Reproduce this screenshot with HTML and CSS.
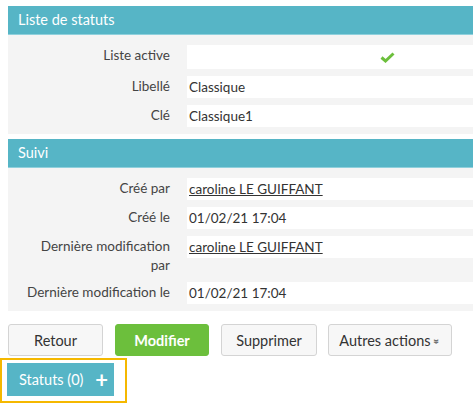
FILE: index.html
```html
<!DOCTYPE html>
<html lang="fr">
<head>
    <meta charset="UTF-8">
    <title>Liste de statuts</title>
    <link rel="stylesheet" href="styles.css">
</head>
<body>
    <div class="page">
        <div class="panel">
            <div class="panel-title">Liste de statuts</div>
            <div class="panel-body">
                <div class="row">
                    <div class="label">Liste active</div>
                    <div class="value value-check">
                        <svg width="15" height="11" viewBox="0 0 15 11"><path d="M1.5 5.5 L5.5 9 L13.5 1.5" fill="none" stroke="#6cbf3c" stroke-width="3"/></svg>
                    </div>
                </div>
                <div class="row">
                    <div class="label">Libellé</div>
                    <div class="value">Classique</div>
                </div>
                <div class="row">
                    <div class="label">Clé</div>
                    <div class="value">Classique1</div>
                </div>
            </div>
        </div>

        <div class="panel">
            <div class="panel-title">Suivi</div>
            <div class="panel-body">
                <div class="row">
                    <div class="label">Créé par</div>
                    <div class="value"><a href="#">caroline LE GUIFFANT</a></div>
                </div>
                <div class="row">
                    <div class="label">Créé le</div>
                    <div class="value">01/02/21 17:04</div>
                </div>
                <div class="row">
                    <div class="label">Dernière modification par</div>
                    <div class="value"><a href="#">caroline LE GUIFFANT</a></div>
                </div>
                <div class="row">
                    <div class="label">Dernière modification le</div>
                    <div class="value">01/02/21 17:04</div>
                </div>
            </div>
        </div>

        <div class="actions">
            <button class="btn btn-back">Retour</button>
            <button class="btn btn-edit">Modifier</button>
            <button class="btn btn-delete">Supprimer</button>
            <button class="btn btn-more">Autres actions <span class="chevron">&#x00BB;</span></button>
        </div>

        <div class="highlight">
            <button class="btn-status">Statuts (0) <span class="plus">+</span></button>
        </div>
    </div>
</body>
</html>
```

FILE: styles.css
```css
* {
    box-sizing: border-box;
    margin: 0;
    padding: 0;
}

body {
    font-family: Lato, "Open Sans", sans-serif;
    font-size: 13.5px;
    color: #333;
    background: #fff;
}

.page {
    padding-top: 6px;
}

.panel {
    margin-left: 8px;
    margin-bottom: 5px;
}

.panel-title {
    height: 29px;
    line-height: 28px;
    padding-left: 10px;
    background-color: #56b5c6;
    border-bottom: 1px solid #8fd0dc;
    color: #fff;
    font-size: 14.5px;
}

.panel-body {
    background: #f4f4f4;
    padding: 10px 0 7px;
    display: flex;
    flex-direction: column;
    gap: 7px;
}

.row {
    display: grid;
    grid-template-columns: 179px 1fr;
    min-height: 22px;
}

.label {
    text-align: right;
    padding: 1px 17px 0 16px;
    line-height: 19px;
    color: #444;
}

.value {
    background: #fff;
    height: 22px;
    line-height: 22px;
    padding-left: 2px;
}

.value-check {
    height: 24px;
    display: flex;
    align-items: center;
    padding-left: 193px;
}

.value a {
    color: #333;
    text-decoration: underline;
}

.actions {
    display: flex;
    gap: 12px;
    margin: 13px 0 2px 8px;
}

.btn {
    height: 32px;
    font-family: inherit;
    font-size: 14.5px;
    color: #333;
    background: #f7f7f7;
    border: 1px solid #d4d4d4;
    border-radius: 3px;
}

.btn-back {
    width: 95px;
}

.btn-edit {
    width: 94px;
    background: #6cbf3c;
    border-color: #6cbf3c;
    color: #fff;
    font-weight: bold;
}

.btn-delete {
    width: 96px;
}

.btn-more {
    width: 124px;
    margin-left: -1px;
}

.chevron {
    display: inline-block;
    transform: rotate(90deg);
    font-size: 12px;
    font-weight: bold;
    color: #666;
    margin-left: 1px;
}

.highlight {
    width: 127px;
    height: 45px;
    border: 2px solid #f5b800;
    padding: 3px 0 0 5px;
}

.btn-status {
    width: 107px;
    height: 33px;
    border: none;
    background: #56b5c6;
    color: #fff;
    font-family: inherit;
    font-size: 14.5px;
    display: flex;
    align-items: center;
    justify-content: space-between;
    padding: 0 6px 0 12px;
}

.plus {
    font-size: 22px;
    font-weight: bold;
    line-height: 1;
}
```
